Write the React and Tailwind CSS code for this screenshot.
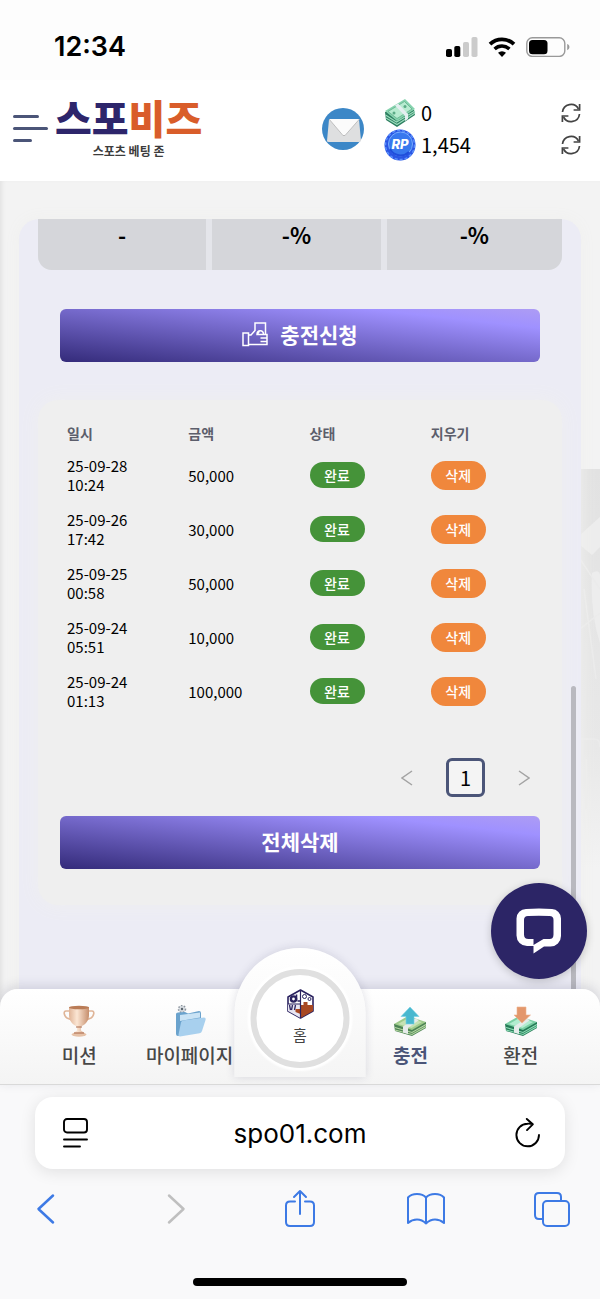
import React, { useState } from 'react';

const ROWS = [
  { id: 1, date: '25-09-28', time: '10:24', amount: 50000 },
  { id: 2, date: '25-09-26', time: '17:42', amount: 30000 },
  { id: 3, date: '25-09-25', time: '00:58', amount: 50000 },
  { id: 4, date: '25-09-24', time: '05:51', amount: 10000 },
  { id: 5, date: '25-09-24', time: '01:13', amount: 100000 }
];

const SignalIcon = () => (
  <svg width="32" height="20" viewBox="0 0 32 20">
    <rect x="0" y="12" width="6" height="8" rx="1.8" fill="#000" />
    <rect x="8.3" y="9" width="6" height="11" rx="1.8" fill="#000" />
    <rect x="17" y="5" width="6" height="15" rx="1.8" fill="#cbcbcb" />
    <rect x="25.5" y="0" width="6" height="20" rx="1.8" fill="#cbcbcb" />
  </svg>
);

const WifiIcon = () => (
  <svg width="28" height="20" viewBox="0 0 28 20" fill="none" stroke="#000">
    <path d="M2 7.2a17.3 17.3 0 0 1 24 0" strokeWidth="3.8" />
    <path d="M6.6 12a10.6 10.6 0 0 1 14.8 0" strokeWidth="3.4" />
    <path d="M14 20l-4-4.3a6 6 0 0 1 8 0z" fill="#000" stroke="none" />
  </svg>
);

const BatteryIcon = () => (
  <svg width="44" height="20" viewBox="0 0 44 20">
    <rect x="0.8" y="0.8" width="38" height="18.6" rx="5.5" fill="none" stroke="#999" strokeWidth="1.4" />
    <rect x="3" y="3" width="18.5" height="14.3" rx="3.5" fill="#000" />
    <path d="M41.2 7v6.2c1.6-.6 2.2-1.7 2.2-3.1s-.6-2.5-2.2-3.1z" fill="#999" />
  </svg>
);

const MailIcon = () => (
  <svg width="42" height="42" viewBox="0 0 42 42">
    <circle cx="21" cy="21" r="21" fill="#3c87c7" />
    <path d="M7 11.5h30l2 21.500q-1 1-2 1H7q-2 0-2-1z" fill="#dedfe0" />
    <path d="M7 11h30.500L24 26.500q-2 2-4 0z" fill="#fbfbfb" />
    <path d="M7 11l14 16.500h2L37.500 11" fill="none" stroke="#aaa" strokeWidth="0.7" />
  </svg>
);

const CashIcon = () => (
  <svg width="32" height="30" viewBox="0 0 32 30">
    <path d="M1 14l1 8 11 7 18-12-1-5z" fill="#2b7d5f" />
    <path d="M1.500 17l11 7L31 13M2 20l11 6.500L31 15" fill="none" stroke="#9bdcbc" strokeWidth="1.2" />
    <path d="M1 13L21 1l10 10-18 12z" fill="#86d3ae" />
    <path d="M4 13.500L20.500 3.500l7.500 7.500-15 9.500z" fill="#b7ebd0" stroke="#5bab86" strokeWidth="0.7" />
    <circle cx="21" cy="8.500" r="1.500" fill="#5bab86" />
    <circle cx="10" cy="15" r="1.500" fill="#5bab86" />
    <path d="M11 7.500l3-2 10 10.500v5l-3 2v-5z" fill="#e4eef0" />
  </svg>
);

const CoinIcon = () => (
  <svg width="32" height="32" viewBox="0 0 32 32">
    <circle cx="16" cy="16" r="15.500" fill="#2a55e4" />
    <circle cx="16" cy="16" r="14.500" fill="none" stroke="#5a90fa" strokeWidth="1.500" strokeDasharray="3 2" />
    <circle cx="16.500" cy="15" r="12" fill="#3878ee" stroke="#78acff" strokeWidth="1" />
    <path d="M6 20a12 12 0 0 0 19 3" fill="none" stroke="#1f4edb" strokeWidth="2" />
    <text x="16" y="19.500" textAnchor="middle" fontFamily="Inter, sans-serif" fontSize="13" fontWeight="800" fontStyle="italic" fill="#fff">RP</text>
  </svg>
);

const RefreshIcon = () => (
  <svg width="20" height="20" viewBox="0 0 20 20" fill="none" stroke="#444" strokeWidth="1.700">
    <path d="M1.500 9A8.500 8.500 0 0 1 17.500 6M18.500 11A8.500 8.500 0 0 1 2.500 14" />
    <path d="M18.600 1v6h-6M1.400 19v-6h6" />
  </svg>
);

const HandCashIcon = () => (
  <svg width="26" height="26" viewBox="0 0 26 26" fill="none" stroke="#fff" strokeWidth="1.500">
    <path d="M1 12h5.500v12.500H1zM6.500 14H9l4-4.500V2h10.500v11.500" />
    <path d="M6.500 23.500H25V13.500H15c0-5 6.500-5 6.500 0M15 13.500L17.500 10M18.500 17h6.500M18.500 20.500h6.500" />
  </svg>
);

const TrophyIcon = () => (
  <svg width="32" height="32" viewBox="0 0 32 32">
    <defs>
      <linearGradient id="cup" x1="0" x2="1">
        <stop offset="0" stopColor="#e0b497" /><stop offset="0.400" stopColor="#fbe6d4" /><stop offset="1" stopColor="#c68e6c" />
      </linearGradient>
    </defs>
    <path d="M7 6H3c-3 0-2 5 1 7l5 2M25 6h4c3 0 2 5-1 7l-5 2" fill="none" stroke="#dfb598" strokeWidth="1.600" />
    <path d="M6 2h20v8c0 6-4 10-8 11.500v4l4 3v2.500H10v-2.500l4-3v-4C10 20 6 16 6 10z" fill="url(#cup)" />
    <ellipse cx="16" cy="2.500" rx="10" ry="1.800" fill="#b97b56" />
    <ellipse cx="16" cy="29.500" rx="7.500" ry="2.200" fill="#e6c1a6" />
    <path d="M13 22h6M11 28h10" stroke="#a9684a" strokeWidth="1" />
  </svg>
);

const FolderIcon = () => (
  <svg width="32" height="32" viewBox="0 0 32 32">
    <circle cx="8" cy="4" r="3.500" fill="#d8dde2" stroke="#8c959e" strokeDasharray="1.500 1.500" strokeWidth="1.500" />
    <circle cx="8" cy="4" r="1.200" fill="#5a636b" />
    <path d="M2 9q0-1.500 2-1.500l7-.5 3 1.500 11-2.500q2 0 2 2V27L4 31q-2 0-2-2z" fill="#6ba3cd" />
    <path d="M6 10l20-2.500v5L6 16z" fill="#c9e3f5" />
    <path d="M9 15.500l21-3q2 0 1.700 2L28 26q-.5 2-2.500 2.300L6 31.500q-2 0-1.500-2L7 17.500q.4-1.700 2-2z" fill="#a8d0ee" />
  </svg>
);

const BundleArrowIcon = ({ up }) => (
  <svg width="32" height="32" viewBox="0 0 32 32">
    <path d="M0 19l1 7 17 5 14-8v-6z" fill={up ? '#4d8355' : '#257a56'} />
    <path d="M1 22.500l17 5 14-8M1 25l17 4.500 14-8" fill="none" stroke={up ? '#b5d8a2' : '#8cdcb5'} strokeWidth="1.100" />
    <path d="M0 19l14-8 18 6-14 8z" fill={up ? '#9fcb8b' : '#7bcfa4'} />
    <path d="M4 19l10.500-6L28 17l-10.500 6z" fill={up ? '#c5e2b3' : '#b3ecd0'} />
    <path d="M9 21.500l12-8 4 1.500-11 8v6l-5-1.500z" fill="#e6ebea" />
    {up ? (
      <path d="M16 2l9 9.500h-5V19h-8v-7.500H7z" fill="#49b8cf" stroke="#73d0e2" strokeWidth="0.600" />
    ) : (
      <path d="M12 2h9v8h4.500l-8.500 8-8-8h3z" fill="#e3976b" stroke="#efb18d" strokeWidth="0.600" />
    )}
  </svg>
);

const HomeCubeIcon = () => (
  <svg width="28" height="30" viewBox="0 0 28 30">
    <path d="M14 1l12.500 7v14L14 29 1.500 22V8z" fill="#fff" stroke="#2a225f" strokeWidth="1.600" strokeLinejoin="round" />
    <path d="M14 16h3v-3h4v3h5.500v6L14 29z" fill="#a84822" />
    <path d="M1.500 15H14v14L1.500 22z" fill="#e8e6f2" />
    <path d="M3 16l1 5M6 16l-1 5M9 16l-1 5" stroke="#2a225f" strokeWidth="1.300" />
    <path d="M9 20h5v5l-5-2z" fill="#a84822" />
    <path d="M14 1v28M1.500 15H14" stroke="#2a225f" strokeWidth="1.200" />
    <circle cx="7" cy="10" r="2.600" fill="none" stroke="#2a225f" strokeWidth="2.400" />
    <path d="M10 5.500v6M11 12h3" stroke="#2a225f" strokeWidth="1.600" />
    <circle cx="18" cy="7.500" r="2" fill="none" stroke="#2a225f" />
    <circle cx="23" cy="10" r="1.500" fill="none" stroke="#2a225f" />
  </svg>
);

const ChatIcon = () => (
  <svg width="46" height="46" viewBox="0 0 46 46">
    <path d="M10 1q13-1 26 0a9.500 9.500 0 0 1 9 9.500v17.500a10.500 10.500 0 0 1-10.500 10.500h-6.500L17.500 45.500V38H11A10.500 10.500 0 0 1 .5 27.500v-17A9.500 9.500 0 0 1 10 1zM12 8Q8 8 8 12v14.500q0 4.500 4.500 4.500h5v6l10-6H33.500q4 0 4-4.500V12q0-4-4-4-10.500-.5-21.500 0z" fill="#fff" fillRule="evenodd" />
  </svg>
);

// Faint photo peeking out to the right of the panel
const Backdrop = () => (
  <svg className="absolute right-0 top-[288px]" width="20" height="400" viewBox="0 0 20 400">
    <defs>
      <linearGradient id="fade" x1="0" y1="0" x2="0" y2="1">
        <stop offset="0" stopColor="#e2e2e2" /><stop offset="0.700" stopColor="#e8e8e8" /><stop offset="1" stopColor="#f3f3f3" />
      </linearGradient>
    </defs>
    <rect width="20" height="400" fill="url(#fade)" />
    <path d="M0 66l20-18v30l-8 8-12-10zM12 104q10-6 8 10v60q-10-30-8-70z" fill="#ededed" />
    <path d="M0 90l20 30M0 160l20-16M4 120l12 90M0 270h14q6 0 6 8M6 290v50M0 310h20" fill="none" stroke="#ebebeb" strokeWidth="1.500" />
  </svg>
);

const GradientButton = ({ children }) => (
  <button type="button" className="flex h-[53px] items-center justify-center gap-3 rounded-md bg-[linear-gradient(to_top_right,#342b7a,#9f91ff_82%,#ad9cf4)] pb-[3px] text-[21px] leading-none font-bold text-white">
    {children}
  </button>
);

const NavItem = ({ icon, label, active }) => (
  <a href="#" className={`flex flex-1 flex-col items-center gap-[6px] pt-4 text-[19px] leading-6 whitespace-nowrap ${active ? 'font-bold text-[#4b5578]' : 'font-medium text-[#484848]'}`}>
    {icon}
    {label}
  </a>
);

const ToolButton = ({ label, color = 'text-[#3d7ae5]', children }) => (
  <button type="button" aria-label={label} className={color}>
    <svg width="40" height="40" viewBox="0 0 40 40" fill="none" stroke="currentColor" strokeWidth="2" strokeLinecap="round" strokeLinejoin="round">{children}</svg>
  </button>
);

export default function App() {
  const [rows, setRows] = useState(ROWS);

  return (
    <div className="flex min-h-screen flex-col bg-white font-['Noto_Sans_CJK_KR',sans-serif] text-black">
      <div className="flex h-20 items-center justify-between bg-[#fdfdfd] pt-[14px] pr-[30px] pl-[54px]">
        <span className="font-['Inter',sans-serif] text-[27px] leading-8 font-semibold">12:34</span>
        <div className="flex items-center gap-[10px]"><SignalIcon /><WifiIcon /><BatteryIcon /></div>
      </div>

      <header className="flex h-[101px] items-center bg-white pr-[19px] pb-1 pl-[13px]">
        <button type="button" aria-label="메뉴" className="flex w-[35px] flex-col gap-[9px]">
          <span className="h-[3px] w-[26px] rounded-full bg-[#4b5578]" />
          <span className="h-[3px] w-[35px] rounded-full bg-[#4b5578]" />
          <span className="h-[3px] w-[19px] rounded-full bg-[#4b5578]" />
        </button>
        <a href="#" className="ml-[7px] flex flex-col items-center">
          <span className="mb-1 text-[40px] leading-[40px] font-black text-[#2d256b]">스포<span className="text-[#d95d2a]">비즈</span></span>
          <span className="text-xs leading-5 font-bold text-[#3c3c3c]">스포츠 베팅 존</span>
        </a>
        <button type="button" aria-label="쪽지" className="ml-auto"><MailIcon /></button>
        <div className="ml-5 flex w-[197px] flex-col text-[20px] leading-7">
          <div className="flex h-8 items-center"><CashIcon /><span className="ml-[5px]">0</span><button type="button" aria-label="보유머니 새로고침" className="ml-auto"><RefreshIcon /></button></div>
          <div className="flex h-8 items-center"><CoinIcon /><span className="ml-[5px]">1,454</span><button type="button" aria-label="포인트 새로고침" className="ml-auto"><RefreshIcon /></button></div>
        </div>
      </header>

      <main className="relative flex flex-1 flex-col bg-[#f3f3f3] px-[19px] pt-[38px] shadow-[inset_4px_0_4px_-2px_#e2e2e2]">
        <Backdrop />
        <section className="relative flex-1 rounded-t-[20px] bg-[#ececf5] px-[19px] pb-20 shadow-[0_0_16px_#f0f0ee]">
          <div className="grid grid-cols-[168fr_168fr_175fr] gap-[6px] overflow-hidden rounded-b-[14px] bg-[#e4e5ea] text-center text-[22px] leading-[30px] font-bold">
            {['-', '-%', '-%'].map((value, i) => (
              <div key={i} className="h-[51px] bg-[#d5d6da]">{value}</div>
            ))}
          </div>

          <div className="flex flex-col px-[22px] pt-[39px]">
            <GradientButton><HandCashIcon />충전신청</GradientButton>
          </div>

          <div className="mt-[38px] rounded-[20px] bg-[#efefef] pt-[18px] pb-9 shadow-[0_0_20px_#efefef]">
            <div className="pr-[10px] pl-[29px]">
              <table className="w-full table-fixed text-left">
                <thead>
                  <tr className="h-[30px] text-[14px] leading-5 text-[#5c5e6b]">
                    <th className="font-bold">일시</th><th className="font-bold">금액</th><th className="font-bold">상태</th><th className="font-bold">지우기</th>
                  </tr>
                </thead>
                <tbody>
                  {rows.map((row) => (
                    <tr key={row.id} className="h-[54px] text-[15px] leading-[19px]">
                      <td>{row.date}<br />{row.time}</td>
                      <td>{row.amount.toLocaleString('en-US')}</td>
                      <td><span className="flex h-[26px] w-[55px] items-center justify-center rounded-full bg-[#459339] text-[14px] font-medium text-white">완료</span></td>
                      <td><button type="button" onClick={() => setRows(rows.filter((r) => r.id !== row.id))} className="flex h-[29px] w-[55px] items-center justify-center rounded-full bg-[#f0873c] text-[14px] font-medium text-white">삭제</button></td>
                    </tr>
                  ))}
                </tbody>
              </table>
            </div>

            <nav aria-label="페이지" className="mt-10 flex items-center justify-end gap-[33px] pr-8">
              <button type="button" aria-label="이전"><svg width="12" height="16" viewBox="0 0 12 16" fill="none" stroke="#a3a3a3" strokeWidth="1.500"><path d="M11 1L1 8l10 7" /></svg></button>
              <button type="button" className="h-[39px] w-[39px] rounded-md border-3 border-[#4b5578] bg-[#f4f4f4] text-[20px] leading-[30px]">1</button>
              <button type="button" aria-label="다음"><svg width="12" height="16" viewBox="0 0 12 16" fill="none" stroke="#a3a3a3" strokeWidth="1.500"><path d="M1 1l10 7-10 7" /></svg></button>
            </nav>

            <div className="flex flex-col px-[22px] pt-[19px]">
              <GradientButton>전체삭제</GradientButton>
            </div>
          </div>
        </section>
        <div className="absolute right-6 bottom-0 h-[321px] w-[5px] rounded-full bg-[#b9b9bf]" />
        <button type="button" aria-label="채팅 상담" className="absolute right-[13px] bottom-[28px] z-10 flex h-24 w-24 items-center justify-center rounded-full bg-[#2c2566] shadow-[0_2px_8px_rgba(0,0,0,0.2)]"><ChatIcon /></button>
      </main>

      <nav aria-label="하단 메뉴" className="relative -mt-[18px] flex h-[96px] rounded-t-[18px] border-b border-[#d9d9d9] bg-linear-to-b from-white to-[#f4f4f4] px-6 shadow-[0_-3px_12px_rgba(40,40,80,0.15)]">
        <NavItem icon={<TrophyIcon />} label="미션" />
        <NavItem icon={<FolderIcon />} label="마이페이지" />
        <div className="relative flex-1">
          <a href="#" className="absolute bottom-[7px] left-1/2 flex h-[129px] w-[131px] -translate-x-1/2 justify-center rounded-t-[66px] bg-linear-to-b from-white to-[#f5f5f5] pt-[21px] shadow-[0_0_10px_rgba(40,40,80,0.15)]">
            <span className="flex h-[99px] w-[99px] flex-col items-center rounded-full border-6 border-[#e0e0e0] bg-white pt-[14px] text-[15px] leading-8 text-[#444] shadow-[0_0_2px_3px_white]">
              <HomeCubeIcon />홈
            </span>
          </a>
        </div>
        <NavItem icon={<BundleArrowIcon up />} label="충전" active />
        <NavItem icon={<BundleArrowIcon />} label="환전" />
      </nav>

      <footer className="flex h-[214px] flex-col bg-[#f9f9fa] pt-3">
        <div className="mx-[35px] flex h-[72px] items-center rounded-[18px] bg-white px-6 shadow-[0_3px_16px_rgba(0,0,0,0.1)]">
          <button type="button" aria-label="페이지 메뉴">
            <svg width="30" height="30" viewBox="-4 0 30 30" fill="none" stroke="#000" strokeWidth="1.900" strokeLinecap="round"><rect x="1" y="1" width="23" height="13.500" rx="3" /><path d="M1 21.500h23M1 28.500h16" /></svg>
          </button>
          <input aria-label="주소" defaultValue="spo01.com" className="min-w-0 flex-1 bg-transparent text-center font-['Inter',sans-serif] text-[26px] outline-none" />
          <button type="button" aria-label="새로고침">
            <svg width="30" height="30" viewBox="-4 0 30 30" fill="none" stroke="#000" strokeWidth="1.900" strokeLinecap="round" strokeLinejoin="round"><path d="M17.500 6.200Q15 5.500 12.500 5.700A11.300 11.300 0 1 0 24 17M11.800 1l6 5.300-5.800 5.800" /></svg>
          </button>
        </div>
        <div className="mt-5 flex justify-between px-[28px]">
          <ToolButton label="뒤로"><path d="M25 6.500L10.500 20 25 33.500" strokeWidth="2.500" /></ToolButton>
          <ToolButton label="앞으로" color="text-[#bfbfbf]"><path d="M15 6.500L29.500 20 15 33.500" strokeWidth="2.500" /></ToolButton>
          <ToolButton label="공유"><path d="M15 12.500h-5q-4 0-4 4V33q0 4 4 4h20q4 0 4-4V16.500q0-4-4-4h-5M20 25V2M14 8l6-6 6 6" /></ToolButton>
          <ToolButton label="책갈피"><path d="M20 8.500Q17 5 11 5T2 8.500V34q4-3.500 9-3.500t9 4q4-4 9-4t9 3.500V8.500Q35 5 29 5t-9 3.500zM20 8.500v26" /></ToolButton>
          <ToolButton label="탭"><rect x="11" y="12" width="26" height="25" rx="4" /><path d="M11 30H7q-4 0-4-4V8q0-4 4-4h18q4 0 4 4v4" /></ToolButton>
        </div>
        <div className="mx-auto mt-auto mb-[13px] h-2 w-[214px] rounded-full bg-black" />
      </footer>
    </div>
  );
}
